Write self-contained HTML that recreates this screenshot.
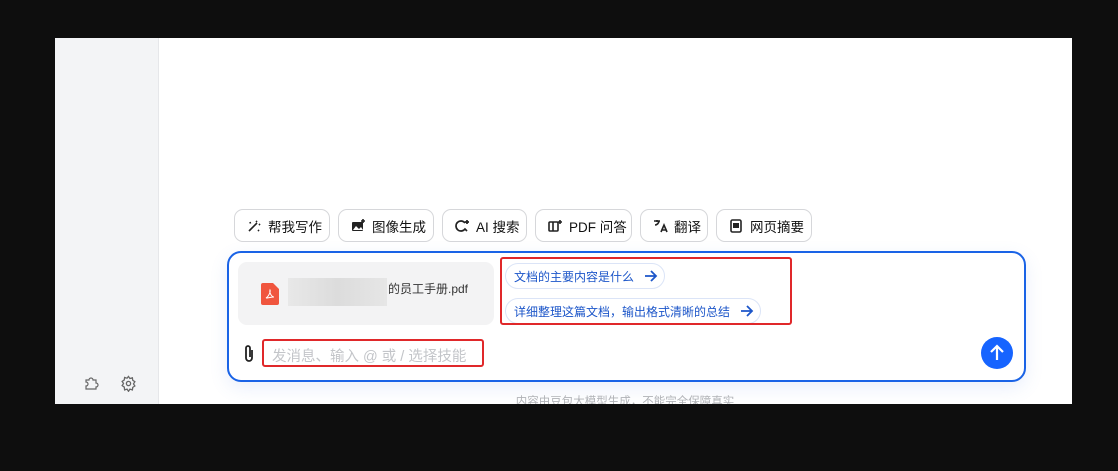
<!DOCTYPE html>
<html><head><meta charset="utf-8"><style>
*{box-sizing:border-box;margin:0;padding:0}
body{width:1118px;height:471px;background:#0e0e0e;position:relative;overflow:hidden;font-family:"Liberation Sans","Noto Sans CJK SC",sans-serif}
.panel{position:absolute;left:55px;top:38px;width:1017px;height:366px;background:#fff;overflow:hidden}
.side{position:absolute;left:0;top:0;width:104px;height:366px;background:#f3f4f6;border-right:1px solid #e6e7ea}
.btn{position:absolute;top:171px;height:33px;border:1px solid #d6d7da;border-radius:9px;font-size:13.5px;color:#111;display:flex;align-items:center;padding-left:11px;gap:6px;background:#fff}
.btn svg{width:16px;height:16px}
.box{position:absolute;left:172px;top:213px;width:799px;height:131px;border:2px solid #1a63e6;border-radius:14px;background:#fff;box-shadow:0 6px 18px rgba(80,120,220,.12)}
.file{position:absolute;left:183px;top:224px;width:256px;height:63px;background:#f3f3f4;border-radius:9px}
.chip{position:absolute;left:450px;height:26px;border:1px solid #dbe4f7;border-radius:13px;font-size:12px;color:#1c56c9;display:flex;align-items:center;padding-left:8px;gap:10px}
.red{position:absolute;border:2.5px solid #e0282a;border-radius:3px}
</style></head><body>
<div class="panel">
<div class="side">
<svg style="position:absolute;left:28px;top:337px" width="16" height="16" viewBox="0 0 16 16" fill="none" stroke="#666" stroke-width="1.2"><path d="M3 5h3a2 2 0 1 1 4 0h3v3a2 2 0 1 1 0 4v2H3v-3a2 2 0 1 0 0-4z"/></svg>
<svg style="position:absolute;left:65px;top:337px" width="17" height="17" viewBox="0 0 24 24" fill="none" stroke="#666" stroke-width="1.8"><circle cx="12" cy="12" r="3"/><path d="M12 2l2 3 3.5-1 .5 3.5 3 2-2 3 2 3-3 2-.5 3.5-3.5-1-2 3-2-3-3.5 1L6 17l-3-2 2-3-2-3 3-2 .5-3.5 3.5 1z"/></svg>
</div>
<div class="btn" style="left:179px;width:96px"><svg viewBox="0 0 16 16" fill="none" stroke="#222" stroke-width="1.6"><path d="M3 13l8-8M10 3l1 1M13 6l1 1M4 4l.5 1.5M12 12l1 1"/></svg>帮我写作</div>
<div class="btn" style="left:283px;width:96px"><svg viewBox="0 0 16 16"><rect x="2" y="4" width="11" height="9" rx="1" fill="#222"/><path d="M3 12l3-4 3 3 2-2 2 3z" fill="#fff"/><path d="M13 1v4M11 3h4" stroke="#222" stroke-width="1.6"/></svg>图像生成</div>
<div class="btn" style="left:387px;width:85px"><svg viewBox="0 0 16 16" fill="none" stroke="#222" stroke-width="1.7"><path d="M11 5a5 5 0 1 0 0 6l2 2"/><path d="M13 2v4M11 4h4"/></svg>AI 搜索</div>
<div class="btn" style="left:480px;width:97px"><svg viewBox="0 0 16 16" fill="none" stroke="#222" stroke-width="1.6"><rect x="2" y="4" width="9" height="9" rx="1"/><path d="M6 4v9M13 2v4M11 4h4"/></svg>PDF 问答</div>
<div class="btn" style="left:585px;width:68px"><svg viewBox="0 0 16 16" fill="none" stroke="#222" stroke-width="1.6"><path d="M2 3h6M5 2v2M3 7c2 0 4-2 4-4M9 14l3-7 3 7M10 12h4"/></svg>翻译</div>
<div class="btn" style="left:661px;width:96px"><svg viewBox="0 0 16 16"><rect x="3" y="2" width="10" height="12" rx="1.5" fill="none" stroke="#222" stroke-width="1.6"/><rect x="5" y="5" width="6" height="5" fill="#222"/></svg>网页摘要</div>
<div class="box"></div>
<div class="file">
<svg style="position:absolute;left:23px;top:21px" width="18" height="22" viewBox="0 0 18 22"><path d="M0 2a2 2 0 0 1 2-2h10l6 6v14a2 2 0 0 1-2 2H2a2 2 0 0 1-2-2z" fill="#f0553e"/><path d="M5 15c2-1 5-6 4-8-1 3 2 7 4 7-3 0-6 1-8 1z" fill="none" stroke="#fff" stroke-width="1"/></svg>
<div style="position:absolute;left:50px;top:16px;width:99px;height:28px;background:linear-gradient(90deg,#e8e8e8,#dcdcdc,#e6e6e6)"></div>
<div style="position:absolute;left:150px;top:18px;font-size:12px;color:#333">的员工手册.pdf</div>
</div>
<div class="chip" style="top:225px;width:160px">文档的主要内容是什么<svg width="14" height="12" viewBox="0 0 14 12" fill="none" stroke="#1c56c9" stroke-width="1.8"><path d="M1 6h11M7 1l5 5-5 5"/></svg></div>
<div class="chip" style="top:260px;width:256px">详细整理这篇文档，输出格式清晰的总结<svg width="14" height="12" viewBox="0 0 14 12" fill="none" stroke="#1c56c9" stroke-width="1.8"><path d="M1 6h11M7 1l5 5-5 5"/></svg></div>
<div class="red" style="left:445px;top:219px;width:292px;height:68px"></div>
<svg style="position:absolute;left:188px;top:306px" width="12" height="20" viewBox="0 0 12 20" fill="none" stroke="#222" stroke-width="1.8"><path d="M9 6v8a3 3 0 0 1-6 0V4a2 2 0 0 1 4 0v9"/></svg>
<div style="position:absolute;left:217px;top:307px;font-size:14.5px;color:#c3c5c9">发消息、输入 @ 或 / 选择技能</div>
<div class="red" style="left:207px;top:301px;width:222px;height:28px"></div>
<div style="position:absolute;left:926px;top:299px;width:32px;height:32px;border-radius:50%;background:#1664ff"><svg width="32" height="32" viewBox="0 0 32 32" fill="none" stroke="#fff" stroke-width="2.2"><path d="M16 23V9M10 15l6-6 6 6"/></svg></div>
<div style="position:absolute;left:0;width:1140px;text-align:center;top:355px;font-size:11.5px;color:#b0b2b6">内容由豆包大模型生成，不能完全保障真实</div>
</div>
</body></html>
